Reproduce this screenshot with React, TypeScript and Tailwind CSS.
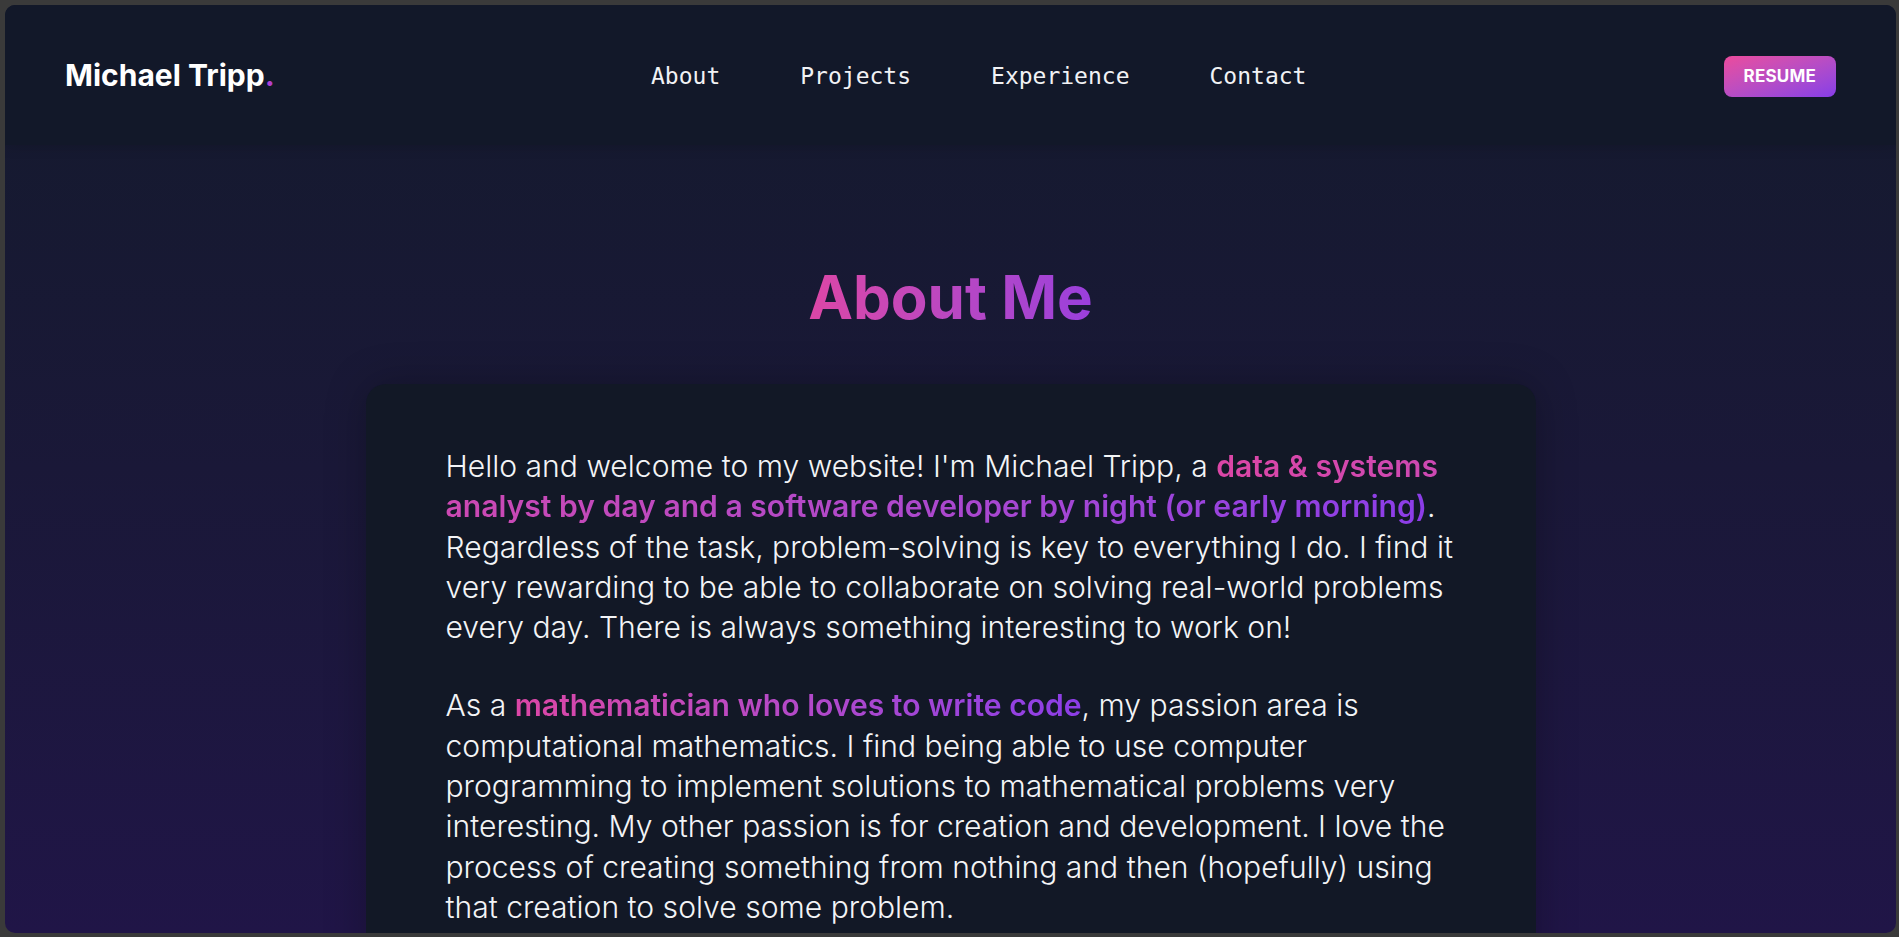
import React from "react";

const inter = { fontFamily: "Inter, 'Noto Sans', sans-serif" };

function Grad({ children }: { children: React.ReactNode }) {
  return (
    <span className="font-semibold bg-gradient-to-r from-[#dc46a6] to-[#8c3de8] bg-clip-text text-transparent">
      {children}
    </span>
  );
}

export default function App() {
  return (
    <div className="w-full h-[937px] bg-[#3a3a3a] pt-[5px] pl-[5px] pr-[3px] pb-[4px] overflow-hidden">
      <div
        className="relative h-full w-full rounded-[10px] overflow-hidden bg-gradient-to-b from-[#141a2d] via-[#1a1838] to-[#201547]"
        style={inter}
      >
        <header className="h-[140px] bg-[#121829] flex items-center px-[60px] shadow-[0_2px_12px_rgba(0,0,0,0.15)]">
          <div className="w-[586px] shrink-0 pt-[1px] text-[30px] font-bold text-white">
            Michael Tripp<span className="text-[#b03fd3]">.</span>
          </div>
          <nav
            className="flex gap-[80px] pt-[2px] text-[23px] text-[#f1f2f5]"
            style={{ fontFamily: "'DejaVu Sans Mono', monospace" }}
          >
            <a>About</a>
            <a>Projects</a>
            <a>Experience</a>
            <a>Contact</a>
          </nav>
          <button className="ml-auto mt-[2px] h-[41px] px-[20px] pt-[1px] rounded-[8px] bg-gradient-to-br from-[#ec4a9c] to-[#873ce8] text-white text-[17px] font-bold tracking-[0.2px]">
            RESUME
          </button>
        </header>

        <section className="flex flex-col items-center pt-[122px]">
          <h2 className="text-[60px] leading-none font-bold bg-gradient-to-r from-[#dc46a6] to-[#9a3fdc] bg-clip-text text-transparent">
            About Me
          </h2>
          <div className="mt-[57px] w-[1170px] rounded-[20px] bg-[#121826] px-[80px] pt-[62px] pb-[80px] shadow-[0_0_40px_rgba(0,0,0,0.25)]">
            <p className="text-[30.1px] leading-[40.3px] font-light text-[#f3f4f6]">
              Hello and welcome to my website! I'm Michael Tripp, a{" "}
              <Grad>
                data &amp; systems analyst by day and a software developer by night (or early morning)
              </Grad>
              . Regardless of the task, problem-solving is key to everything I do. I find it very rewarding to be able to
              collaborate on solving real-world problems every day. There is always something interesting to work on!
            </p>
            <p className="mt-[38px] text-[30.1px] leading-[40.3px] font-light text-[#f3f4f6]">
              As a <Grad>mathematician who loves to write code</Grad>, my passion area is computational mathematics. I
              find being able to use computer programming to implement solutions to mathematical problems very
              interesting. My other passion is for creation and development. I love the process of creating something
              from nothing and then (hopefully) using that creation to solve some problem.
            </p>
          </div>
        </section>
      </div>
    </div>
  );
}
